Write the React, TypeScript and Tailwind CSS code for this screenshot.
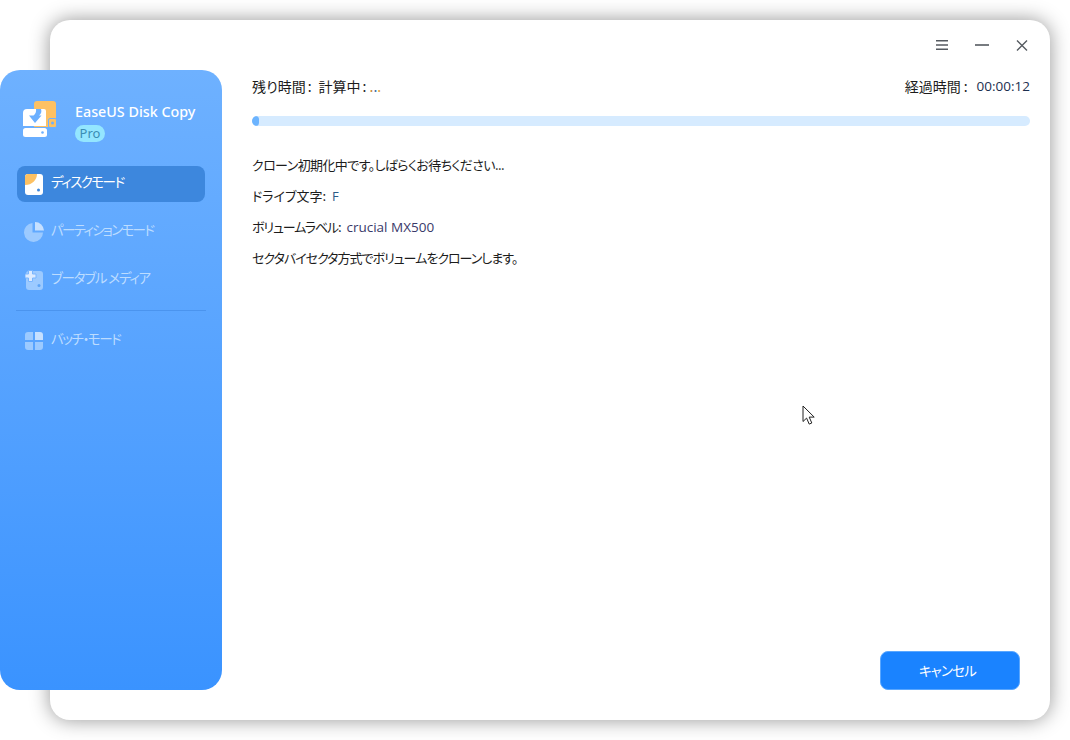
const jp = "font-['Noto_Sans_CJK_JP','Noto_Sans',sans-serif] [font-feature-settings:'palt']";

function DiskIcon() {
  return (
    <svg width="18" height="21" viewBox="0 0 18 21">
      <rect x="0" y="0" width="18" height="21" rx="3" fill="#ffffff" />
      <path d="M3 0h9c0 6-5 11-12 11V3a3 3 0 0 1 3-3z" fill="#fdc163" />
      <circle cx="13.5" cy="16" r="1.5" fill="#3d87dd" />
    </svg>
  );
}

function PieIcon() {
  return (
    <svg width="20" height="20" viewBox="0 0 20 20" className="-ml-px">
      <path d="M8.5 1v9.5H19A9.5 9.5 0 1 1 8.5 1z" fill="#9ccaff" />
      <path d="M11 0a9 9 0 0 1 9 8.5h-9z" fill="#c6e0ff" />
    </svg>
  );
}

function BootIcon() {
  return (
    <svg width="18" height="20" viewBox="0 0 18 20">
      <rect x="1" y="1" width="17" height="19" rx="3" fill="#9ccaff" />
      <path d="M3.500 .5h4v3.500H11v4H7.500v3.500h-4V8H0V4h3.500z" fill="#dcebff" stroke="#78b5ff" strokeWidth="1" />
      <circle cx="14" cy="15.500" r="1.500" fill="#5ea4f5" />
    </svg>
  );
}

function GridIcon() {
  return (
    <svg width="18" height="18" viewBox="0 0 18 18">
      <path d="M3 0h5v8H0V3a3 3 0 0 1 3-3z" fill="#9ccaff" />
      <path d="M10 0h5a3 3 0 0 1 3 3v5h-8z" fill="#c6e0ff" />
      <path d="M0 10h8v8H3a3 3 0 0 1-3-3z" fill="#9ccaff" />
      <path d="M10 10h8v5a3 3 0 0 1-3 3h-5z" fill="#9ccaff" />
    </svg>
  );
}

function Logo() {
  return (
    <svg width="34" height="36" viewBox="0 0 34 36">
      <path d="M14 0h16a3 3 0 0 1 3 3v23H11V3a3 3 0 0 1 3-3z" fill="#fdc163" />
      <rect x="25.500" y="17.500" width="8" height="9" rx="1.500" fill="#fdc163" stroke="#6cb0ff" strokeWidth="1" />
      <circle cx="29.500" cy="22" r="1.500" fill="#6cb0ff" />
      <path d="M4 8h17a2 2 0 0 1 2 2v15H0V12a4 4 0 0 1 4-4z" fill="#ffffff" />
      <rect x="0" y="27" width="24" height="9" rx="2.500" fill="#ffffff" />
      <circle cx="19.500" cy="31.500" r="1.300" fill="#6cb0ff" />
      <path d="M13 8h5c1 3 0 5-2 6.500h2.500L12 22 6 14.500h4.500c2-1.500 3-4 2.500-6.500z" fill="#6cb0ff" />
    </svg>
  );
}

function NavItem({ icon, label, active, track }: { icon: React.ReactNode; label: string; active?: boolean; track: string }) {
  return (
    <div
      className={
        active
          ? "mx-[17px] flex h-9 items-center rounded-lg bg-[#3d87dd] pl-2"
          : "mx-[17px] flex h-9 items-center pl-2"
      }
    >
      <span className="flex w-[26px] shrink-0 items-center">{icon}</span>
      <span
        className={
          active
            ? `${jp} ${track} pb-[5px] text-[13.5px] text-white`
            : `${jp} ${track} pb-[5px] text-[13.5px] text-[#bcdcff]`
        }
      >
        {label}
      </span>
    </div>
  );
}

function Row({ label, value, valueClass, track }: { label: string; value?: string; valueClass?: string; track?: string }) {
  return (
    <p className={`${jp} h-[31px] text-[13px] leading-[30px] text-[#1c1c1c]`}>
      <span className={track}>{label}</span>
      {value ? <span className={valueClass}>{value}</span> : null}
    </p>
  );
}

export default function App() {
  return (
    <div className="h-[740px] w-[1070px] overflow-hidden bg-white pb-5 pl-[50px] pr-5 pt-5">
      <div className="flex h-[700px] w-[1000px] rounded-[20px] bg-white shadow-[0_0_20px_rgba(0,0,0,0.42)]">
        <aside className="relative -ml-[50px] mt-[50px] flex h-[620px] w-[222px] shrink-0 flex-col rounded-[20px] bg-gradient-to-b from-[#6eb1ff] to-[#3a93ff]">
          <div className="flex h-[96px] items-start pl-[23px] pt-[31px]">
            <Logo />
            <div className="ml-[18px]">
              <div className="font-['Noto_Sans',sans-serif] text-[14.300px] font-medium leading-[22px] text-white">EaseUS Disk Copy</div>
              <div className="mt-[2px] flex h-[17px] w-[30px] items-center justify-center rounded-full bg-[#94e6ff] font-['Noto_Sans',sans-serif] text-[13px] leading-none text-[#3b8db5]">
                Pro
              </div>
            </div>
          </div>
          <NavItem active icon={<DiskIcon />} label="ディスクモード" track="tracking-[-1.500px]" />
          <div className="h-3" />
          <NavItem icon={<PieIcon />} label="パーティションモード" track="tracking-[-1.700px]" />
          <div className="h-3" />
          <NavItem icon={<BootIcon />} label="ブータブル メディア" track="tracking-[-1.200px]" />
          <div className="mx-4 mt-3 h-px bg-[#4b94ee]" />
          <div className="mt-3">
            <NavItem icon={<GridIcon />} label="バッチ・モード" track="tracking-[-1.400px]" />
          </div>
        </aside>

        <main className="relative flex min-w-0 flex-1 flex-col pl-[30px] pr-5">
          <div className="flex h-[50px] items-center justify-end gap-[27px] pr-[2px] text-[#555a60]">
            <svg width="12" height="10" viewBox="0 0 12 10" stroke="currentColor" strokeWidth="1.5">
              <path d="M0 .8h12M0 5h12M0 9.200h12" />
            </svg>
            <svg width="14" height="10" viewBox="0 0 14 10" stroke="currentColor" strokeWidth="1.6">
              <path d="M0 5h14" />
            </svg>
            <svg width="12" height="11" viewBox="0 0 12 11" stroke="currentColor" strokeWidth="1.4" fill="none">
              <path d="M1 .5l10 10M11 .5l-10 10" />
            </svg>
          </div>

          <div className={`${jp} flex h-8 items-center justify-between text-[14px] text-[#1c1c1c]`}>
            <span className="flex items-center">
              <span>残り時間</span>
              <span className="ml-[2px]">:</span>
              <span className="ml-[7px]">計算中</span>
              <span className="ml-[2px]">:</span>
              <span className="ml-[3px] flex text-[#c98a3a]">
                <span>.</span>
                <span className="text-[#3a6ea5]">.</span>
                <span className="text-[#e0a040]">.</span>
              </span>
            </span>
            <span className="flex items-center">
              <span>経過時間</span>
              <span className="ml-[3px]">:</span>
              <span className="ml-[9px] font-['Open_Sans',sans-serif] text-[13.500px] text-[#1c2f4f]">00:00:12</span>
            </span>
          </div>

          <div className="mt-[14px] h-[10px] w-full overflow-hidden rounded-[5px] bg-[#d6ebff]">
            <div className="h-full w-[7px] rounded-[5px] bg-[#6cb4ff]" />
          </div>

          <div className="mt-[24px]">
            <Row label="クローン初期化中です。しばらくお待ちください..." track="tracking-[-0.600px]" />
            <Row
              label="ドライブ文字:"
              value="F"
              valueClass="ml-[6px] font-['Open_Sans',sans-serif] text-[#2a5b86]"
            />
            <Row
              label="ボリュームラベル:"
              track="tracking-[-1.100px]"
              value="crucial MX500"
              valueClass="ml-[6px] font-['Open_Sans',sans-serif] text-[13.500px] text-[#3a3a6a]"
            />
            <Row label="セクタバイセクタ方式でボリュームをクローンします。" track="tracking-[-1px]" />
          </div>

          <div className="mb-[30px] mt-auto flex justify-end pr-[10px]">
            <button className={`${jp} h-[39px] w-[140px] rounded-lg border border-[#5aa7ff] bg-[#1a83ff] pr-[5px] text-[13.500px] tracking-[-0.800px] text-white`}>
              キャンセル
            </button>
          </div>

          <svg width="14" height="21" viewBox="0 0 14 21" className="absolute left-[580px] top-[385px]">
            <path d="M1 1v15.500l3.600-3.400 2.600 6 2.600-1.100-2.600-5.900h5z" fill="#ffffff" stroke="#222222" strokeWidth="1" strokeLinejoin="round" />
          </svg>
        </main>
      </div>
    </div>
  );
}
